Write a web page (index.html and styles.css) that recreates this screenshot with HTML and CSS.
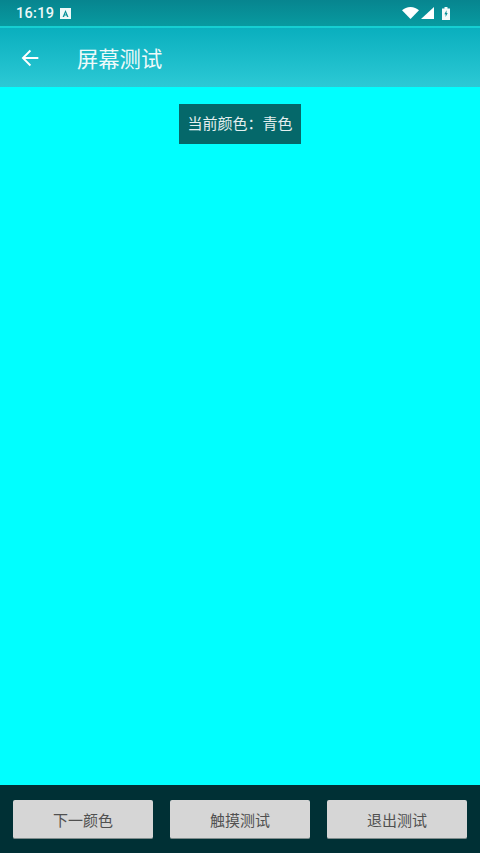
FILE: index.html
```html
<!DOCTYPE html>
<html lang="zh-CN">
<head>
<meta charset="UTF-8" />
<title>屏幕测试</title>
<link rel="stylesheet" href="styles.css">
</head>
<body>
<div class="status-bar">
    <div class="status-left">
        <span class="clock">16:19</span>
        <svg class="notif-icon" width="11" height="11" viewBox="0 0 11 11">
            <path fill="#eef8f8" fill-rule="evenodd" d="M0 0h11v11H0z M5.500 2 L2.600 9h1.500l.5-1.400h1.900L7 9h1.500z M5.500 4.600l.5 1.800H5z"/>
        </svg>
    </div>
    <div class="status-right">
        <svg class="sys-icon" width="17" height="12" viewBox="0 0 17 13" preserveAspectRatio="none"><path fill="#fff" d="M0 3.500C2.200 1.400 5.200 0 8.500 0S14.800 1.400 17 3.500L8.500 13z"/></svg>
        <svg class="sys-icon" width="13" height="12" viewBox="0 0 13 13" preserveAspectRatio="none"><path fill="#fff" d="M13 0v13H0z"/></svg>
        <svg class="battery-icon" width="8" height="13" viewBox="0 0 8 14" preserveAspectRatio="none">
            <path fill="#f2fafa" fill-rule="evenodd" d="M2.500 0h3v1.500H8V14H0V1.500h2.500z M4.500 3.500 L2.400 7.800h1.200v2.900L5.700 6.500H4.500z"/>
        </svg>
    </div>
</div>
<header class="app-bar">
    <svg class="back-icon" width="20" height="20" viewBox="0 0 24 24">
        <path fill="none" stroke="#fff" stroke-width="2.200" d="M22 12H3.500M12.500 3l-9 9 9 9"/>
    </svg>
    <h1 class="app-title">屏幕测试</h1>
</header>
<main class="screen">
    <div class="color-label">当前颜色：青色</div>
</main>
<footer class="actions">
    <button class="action-btn">下一颜色</button>
    <button class="action-btn">触摸测试</button>
    <button class="action-btn">退出测试</button>
</footer>
</body>
</html>
```

FILE: styles.css
```css
html, body {
    height: 100%;
}

body {
    margin: 0;
    display: flex;
    flex-direction: column;
    overflow: hidden;
    background: #00ffff;
    font-family: "Roboto", "Noto Sans CJK SC", sans-serif;
}

.status-bar {
    height: 26px;
    flex: none;
    display: flex;
    align-items: center;
    justify-content: space-between;
    padding: 0 30px 0 16px;
    background: linear-gradient(#07858f, #089aa0);
    border-bottom: 2px solid #16cfd2;
    color: #eef8f8;
}

.status-left {
    display: flex;
    align-items: center;
    gap: 6px;
}

.clock {
    font-size: 14.5px;
    font-weight: 500;
    letter-spacing: 0.3px;
}

.status-right {
    display: flex;
    align-items: center;
    gap: 2px;
}

.battery-icon {
    margin-left: 6px;
}

.app-bar {
    height: 59px;
    flex: none;
    display: flex;
    align-items: center;
    gap: 37px;
    padding-left: 20px;
    background: linear-gradient(#0aafbe, #2cc9d5);
}

.back-icon {
    flex: none;
}

.app-title {
    margin: 0;
    font-size: 21.3px;
    font-weight: 400;
    color: #eefafa;
}

.screen {
    flex: 1;
    display: flex;
    flex-direction: column;
    align-items: center;
    padding-top: 17px;
    background: #00ffff;
}

.color-label {
    padding: 0 8.5px;
    height: 40px;
    line-height: 40px;
    background: #05686a;
    color: #e4efef;
    font-size: 15px;
}

.actions {
    height: 68px;
    flex: none;
    box-sizing: border-box;
    display: flex;
    gap: 17px;
    padding: 15px 13px 14px;
    background: #003035;
}

.action-btn {
    flex: 1;
    padding: 0;
    border: 0;
    border-bottom: 1px solid #7f8c8c;
    border-radius: 2px;
    background: #d6d6d6;
    color: #505050;
    font-family: inherit;
    font-size: 15px;
}
```
